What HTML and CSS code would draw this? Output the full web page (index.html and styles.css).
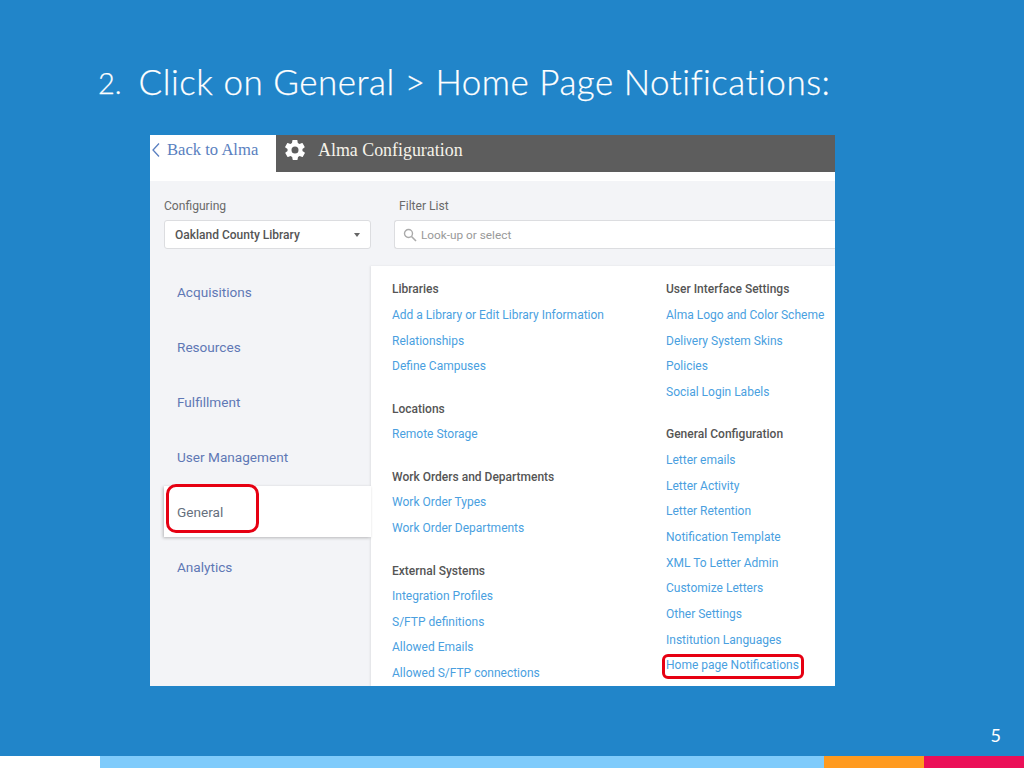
FILE: index.html
```html
<!DOCTYPE html>
<html lang="en">
<head>
<meta charset="utf-8">
<title>Home Page Notifications</title>
<link rel="stylesheet" href="styles.css">
</head>
<body>
<main class="slide">
  <div class="content">
    <h1 class="title"><span class="num">2.</span><span>Click on General &gt; Home Page Notifications:</span></h1>
    <section class="shot">
      <header class="topbar">
        <a class="back"><svg class="chev" viewBox="0 0 10 16" width="10" height="16"><path d="M8 1.500 2 8l6 6.500" fill="none" stroke="#5a7fc0" stroke-width="1.300"/></svg>Back to Alma</a>
        <div class="appbar">
          <svg class="gear" viewBox="0 0 24 24" width="24" height="24"><path fill="#fff" fill-rule="evenodd" d="M19.400 13c.1-.3.1-.7.1-1s0-.7-.1-1l2.100-1.600c.2-.2.2-.4.1-.6l-2-3.500c-.1-.2-.4-.3-.6-.2l-2.500 1c-.5-.4-1.100-.7-1.700-1l-.4-2.700c0-.2-.2-.4-.5-.4h-4c-.2 0-.5.2-.5.4l-.4 2.700c-.6.300-1.200.6-1.700 1l-2.500-1c-.2-.1-.5 0-.6.2l-2 3.500c-.1.2-.1.4.1.6L4.600 11c-.1.300-.1.700-.1 1s0 .700.1 1l-2.100 1.600c-.2.200-.2.400-.1.600l2 3.500c.1.200.4.300.6.200l2.500-1c.5.400 1.100.700 1.700 1l.4 2.700c0 .200.200.400.500.400h4c.300 0 .500-.200.500-.400l.400-2.700c.600-.300 1.200-.600 1.700-1l2.500 1c.200.100.500 0 .600-.200l2-3.500c.100-.200.100-.400-.100-.600zM12 15.500a3.500 3.500 0 1 1 0-7 3.500 3.500 0 0 1 0 7z"/></svg>
          <span class="apptitle">Alma Configuration</span>
        </div>
      </header>
      <div class="workspace">
        <div class="filters">
          <div class="field field-lib">
            <label class="label">Configuring</label>
            <div class="box select"><span>Oakland County Library</span><i class="caret"></i></div>
          </div>
          <div class="field field-filter">
            <label class="label">Filter List</label>
            <div class="box search">
              <svg viewBox="0 0 14 14" width="14" height="14"><circle cx="5.500" cy="5.500" r="4" fill="none" stroke="#aaa" stroke-width="1.400"/><path d="M8.500 8.500 13 13" stroke="#aaa" stroke-width="1.600"/></svg>
              <span>Look-up or select</span>
            </div>
          </div>
        </div>
        <div class="main">
          <nav class="nav">
            <a class="nav-item">Acquisitions</a>
            <a class="nav-item">Resources</a>
            <a class="nav-item">Fulfillment</a>
            <a class="nav-item">User Management</a>
            <a class="nav-item active">General<span class="ring ring-nav"></span></a>
            <a class="nav-item">Analytics</a>
          </nav>
          <div class="panel">
            <div class="col col-a">
              <h3>Libraries</h3>
              <a>Add a Library or Edit Library Information</a>
              <a>Relationships</a>
              <a>Define Campuses</a>
              <h3 class="next">Locations</h3>
              <a>Remote Storage</a>
              <h3 class="next">Work Orders and Departments</h3>
              <a>Work Order Types</a>
              <a>Work Order Departments</a>
              <h3 class="next">External Systems</h3>
              <a>Integration Profiles</a>
              <a>S/FTP definitions</a>
              <a>Allowed Emails</a>
              <a>Allowed S/FTP connections</a>
            </div>
            <div class="col col-b">
              <h3>User Interface Settings</h3>
              <a>Alma Logo and Color Scheme</a>
              <a>Delivery System Skins</a>
              <a>Policies</a>
              <a>Social Login Labels</a>
              <h3 class="next">General Configuration</h3>
              <a>Letter emails</a>
              <a>Letter Activity</a>
              <a>Letter Retention</a>
              <a>Notification Template</a>
              <a>XML To Letter Admin</a>
              <a>Customize Letters</a>
              <a>Other Settings</a>
              <a>Institution Languages</a>
              <a class="marked">Home page Notifications<span class="ring ring-link"></span></a>
            </div>
          </div>
        </div>
      </div>
    </section>
    <div class="pageno">5</div>
  </div>
  <footer class="stripe">
    <span class="s-white"></span><span class="s-sky"></span><span class="s-orange"></span><span class="s-red"></span>
  </footer>
</main>
</body>
</html>
```

FILE: styles.css
```css
* { box-sizing: border-box; }
html, body { margin: 0; padding: 0; }
body { width: 1024px; height: 768px; overflow: hidden; background: #2185c9; }
.slide { width: 1024px; height: 768px; display: flex; flex-direction: column; background: #2185c9; }
.content { flex: 1; display: flex; flex-direction: column; min-height: 0; }
.title {
  margin: 0; height: 135px; padding: 60px 0 0 98px;
  display: flex; gap: 17px;
  font: 300 35px/42px Lato, "Open Sans", sans-serif;
  font-variant-ligatures: none;
  letter-spacing: .5px;
  -webkit-text-stroke: .25px #fff;
  color: #fff; white-space: nowrap;
}
.num { font-size: 29px; line-height: 46px; letter-spacing: 0; }

.shot { margin-left: 150px; width: 685px; height: 551px; background: #fff; overflow: hidden; display: flex; flex-direction: column; font-family: Roboto, sans-serif; }
.topbar { height: 37px; flex: none; display: flex; background: #fff; }
.back { width: 126px; flex: none; display: flex; align-items: center; gap: 6px; padding: 0 0 7px 1px; font: 16.600px/30px "Liberation Serif", serif; color: #5a7fc0; }
.appbar { flex: 1; background: #5d5d5d; display: flex; align-items: center; gap: 11px; padding: 0 0 7px 7px; margin: 0; }
.gear { flex: none; }
.apptitle { font: 17.900px/30px "Liberation Serif", serif; color: #f6f3ea; }

.workspace { flex: 1; min-height: 0; margin-top: 9px; background: #f3f4f7; display: flex; flex-direction: column; }
.filters { display: flex; height: 85px; flex: none; padding: 18px 0 0 14px; gap: 23px; }
.field { display: flex; flex-direction: column; }
.field-lib { width: 207px; flex: none; }
.field-filter { flex: 1; }
.field-filter .label { padding-left: 5px; }
.label { font-size: 12.100px; line-height: 14px; color: #6a6a6a; margin-bottom: 7px; }
.box { height: 29px; background: #fff; border: 1px solid #dcdde0; border-radius: 3px; display: flex; align-items: center; font-size: 11.800px; }
.select { padding: 0 10px 0 10px; justify-content: space-between; font-weight: 500; color: #555; font-size: 12px; }
.caret { width: 0; height: 0; border-left: 3.500px solid transparent; border-right: 3.500px solid transparent; border-top: 4px solid #666; }
.search { padding-left: 8px; gap: 4px; color: #999; border-right: 0; border-radius: 3px 0 0 3px; }

.main { flex: 1; min-height: 0; display: flex; }
.nav { width: 221px; flex: none; margin-top: -2px; padding: 0 0 0 14px; display: flex; flex-direction: column; }
.nav-item { height: 55px; flex: none; display: flex; align-items: center; padding-left: 13px; font-size: 13.600px; color: #5f78b5; position: relative; }
.nav-item.active { height: 51px; margin: 2px 0; background: #fff; color: #66707e; box-shadow: -1px 1px 3px rgba(0,0,0,.25); }
.ring { position: absolute; border: 3px solid #e60012; pointer-events: none; }
.ring-nav { left: 2px; top: -2px; width: 93px; height: 49px; border-radius: 10px; }

.panel { flex: 1; background: #fff; display: flex; padding: 11.400px 0 0 21px; box-shadow: -1px 0 2px rgba(0,0,0,.08); }
.col { display: flex; flex-direction: column; font-size: 12px; line-height: 25.640px; }
.col-a { width: 274px; flex: none; }
.col-b { flex: 1; }
.col h3 { margin: 0; font-size: 12px; line-height: 25.640px; font-weight: 500; color: #555; white-space: nowrap; }
.col h3.next { margin-top: 16.800px; }
.col a { color: #4a9fdf; white-space: nowrap; }
.marked { position: relative; }
.ring-link { left: -4px; top: 1px; width: 142px; height: 25px; border-radius: 6px; }

.pageno { flex: 1; text-align: right; padding: 37px 23px 0 0; font: 400 18px/24px Lato, sans-serif; color: #fff; }
.stripe { height: 12px; flex: none; display: flex; }
.stripe span { display: block; height: 12px; }
.s-white { width: 100px; background: #fff; }
.s-sky { width: 724px; background: #7fcbfb; }
.s-orange { width: 100px; background: #ff9a1f; }
.s-red { width: 100px; background: #eb0f58; }
```
